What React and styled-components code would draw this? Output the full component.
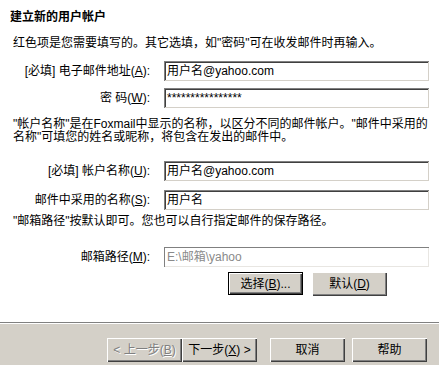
import { createGlobalStyle, styled } from "styled-components";

const GlobalStyle = createGlobalStyle`
  html, body {
    margin: 0;
    padding: 0;
    background: #ffffff;
    overflow: hidden;
  }
  body {
    font-family: "Liberation Sans", "Noto Sans CJK SC", sans-serif;
    font-size: 12px;
    color: #000;
  }
`;

const rows = [
  { label: "[必填] 电子邮件地址", key: "A", value: "用户名@yahoo.com" },
  { label: "密 码", key: "W", value: "****************" },
];

const rows2 = [
  { label: "[必填] 帐户名称", key: "U", value: "用户名@yahoo.com" },
  { label: "邮件中采用的名称", key: "S", value: "用户名" },
];

const App = () => {
  return (
    <>
      <GlobalStyle />
      <Page>
        <Content>
          <Title>建立新的用户帐户</Title>
          <Intro>红色项是您需要填写的。其它选填，如"密码"可在收发邮件时再输入。</Intro>

          <Form $top={11} $gap={7}>
            {rows.map((r) => (
              <Row key={r.key}>
                <Label>
                  {r.label}(<u>{r.key}</u>):
                </Label>
                <Field>{r.value}</Field>
              </Row>
            ))}
          </Form>

          <Para $top={10}>
            "帐户名称"是在Foxmail中显示的名称，以区分不同的邮件帐户。"邮件中采用的
            <br />
            名称"可填您的姓名或昵称，将包含在发出的邮件中。
          </Para>

          <Form $top={17} $gap={9}>
            {rows2.map((r) => (
              <Row key={r.key}>
                <Label>
                  {r.label}(<u>{r.key}</u>):
                </Label>
                <Field>{r.value}</Field>
              </Row>
            ))}
          </Form>

          <Para $top={5}>"邮箱路径"按默认即可。您也可以自行指定邮件的保存路径。</Para>

          <Form $top={19} $gap={0}>
            <Row>
              <Label>
                邮箱路径(<u>M</u>):
              </Label>
              <Field $disabled>E:\邮箱\yahoo</Field>
            </Row>
          </Form>

          <PathButtons>
            <Button $default>
              选择(<u>B</u>)...
            </Button>
            <Button>
              默认(<u>D</u>)
            </Button>
          </PathButtons>
        </Content>

        <Footer>
          <NavGroup>
            <Button $disabled>
              &lt; 上一步(<u>B</u>)
            </Button>
            <Button>
              下一步(<u>X</u>) &gt;
            </Button>
          </NavGroup>
          <Button>取消</Button>
          <Button>帮助</Button>
        </Footer>
      </Page>
    </>
  );
};

const Page = styled.div`
  width: 439px;
  height: 365px;
  display: flex;
  flex-direction: column;
  background: #ffffff;
`;

const Content = styled.div`
  flex: 1;
  padding: 9px 0 0 13px;
  display: flex;
  flex-direction: column;
`;

const Title = styled.div`
  margin-left: -3px;
  font-weight: bold;
  line-height: 14px;
  font-family: "Noto Sans CJK SC", sans-serif;
`;

const Intro = styled.div`
  margin-top: 13px;
  line-height: 14px;
  white-space: nowrap;
`;

const Para = styled.div`
  margin-top: ${(p) => p.$top}px;
  line-height: 13px;
  white-space: nowrap;
`;

const Form = styled.div`
  margin-top: ${(p) => p.$top}px;
  display: flex;
  flex-direction: column;
  gap: ${(p) => p.$gap}px;
`;

const Row = styled.div`
  display: flex;
  align-items: center;
  gap: 14px;
`;

const Label = styled.div`
  width: 137px;
  text-align: right;
  white-space: pre;
  line-height: 14px;
`;

const Field = styled.div`
  box-sizing: border-box;
  width: 265px;
  height: 20px;
  padding: 2px 3px 0;
  background: #ffffff;
  color: ${(p) => (p.$disabled ? "#8a8a8a" : "#000")};
  line-height: 16px;
  white-space: nowrap;
  overflow: hidden;
  box-shadow: ${(p) =>
    p.$disabled
      ? "inset 1px 1px #808080, inset -1px -1px #e8e6e2"
      : "inset 1px 1px #808080, inset -1px -1px #d4d0c8, inset 2px 2px #404040"};
`;

const PathButtons = styled.div`
  margin: 5px 0 0 215px;
  display: flex;
  gap: 9px;
`;

const Button = styled.div`
  box-sizing: border-box;
  width: 75px;
  height: ${(p) => (p.$default ? 23 : 24)}px;
  display: flex;
  align-items: center;
  justify-content: center;
  background: #d4d0c8;
  white-space: nowrap;
  line-height: 14px;
  color: ${(p) => (p.$disabled ? "#808080" : "#000")};
  text-shadow: ${(p) => (p.$disabled ? "1px 1px #ffffff" : "none")};
  border: ${(p) => (p.$default ? "1px solid #000" : "none")};
  box-shadow: inset 1px 1px #ffffff, inset -1px -1px #404040,
    inset -2px -2px #808080;
`;

const Footer = styled.div`
  height: 43px;
  flex-shrink: 0;
  box-sizing: border-box;
  background: #d4d0c8;
  border-top: 1px solid #808080;
  box-shadow: inset 0 1px #ffffff;
  padding: 15px 11px 0 107px;
  display: flex;
  align-items: flex-start;
  gap: 7px;
`;

const NavGroup = styled.div`
  display: flex;
  margin-right: 6px;
`;

export default App;
